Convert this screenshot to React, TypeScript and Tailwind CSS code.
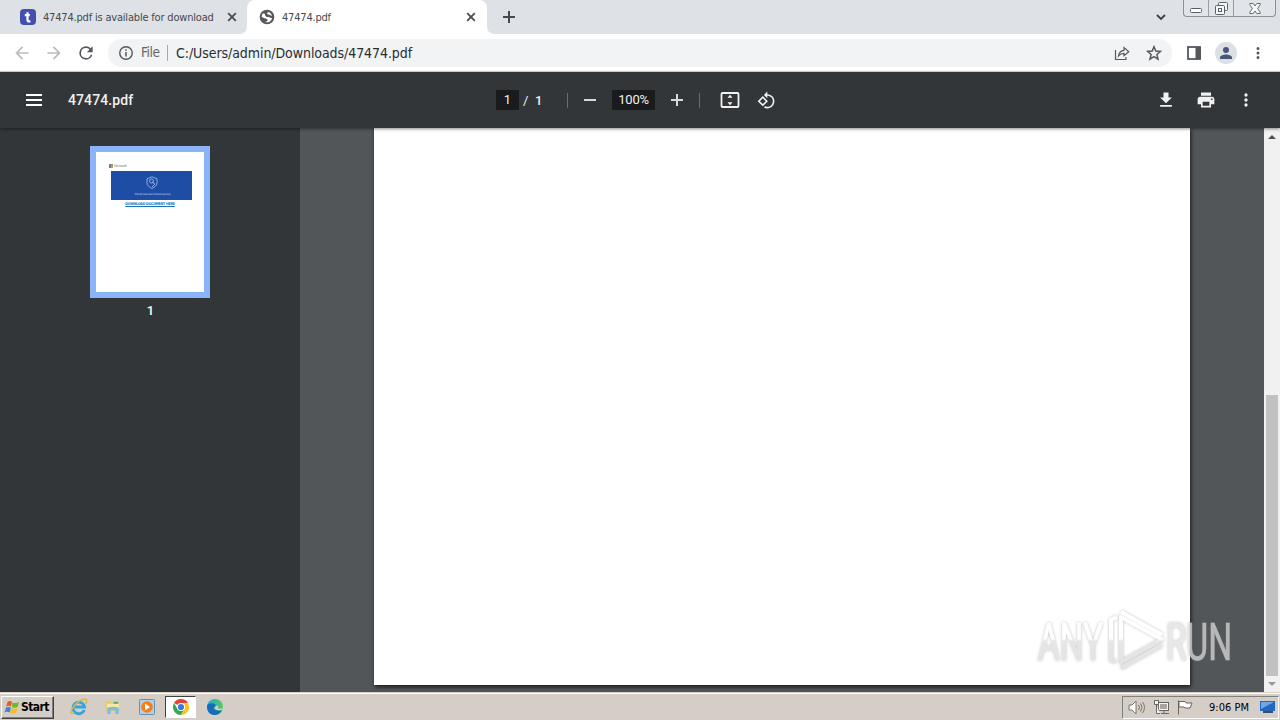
import type { ReactNode } from "react";

function Cell({ className = "", children }: { className?: string; children?: ReactNode }) {
  return <div className={`flex shrink-0 items-center justify-center ${className}`}>{children}</div>;
}

function Icon({ d, size = 16, className = "", box = 24 }: { d: string; size?: number; className?: string; box?: number }) {
  return (
    <svg width={size} height={size} viewBox={`0 0 ${box} ${box}`} className={`shrink-0 ${className}`} fill="currentColor">
      <path d={d} />
    </svg>
  );
}

const BACK = "M20 11H7.830l5.590-5.590L12 4l-8 8 8 8 1.410-1.410L7.830 13H20z";
const FORWARD = "M12 4l-1.410 1.410L16.170 11H4v2h12.170l-5.580 5.590L12 20l8-8z";
const RELOAD = "M17.650 6.350A7.960 7.960 0 0 0 12 4a8 8 0 1 0 7.730 10h-2.080A6 6 0 1 1 12 6c1.660 0 3.140.69 4.220 1.780L13 11h7V4z";
const MORE = "M12 8a2 2 0 1 0 0-4 2 2 0 0 0 0 4zm0 2a2 2 0 1 0 0 4 2 2 0 0 0 0-4zm0 6a2 2 0 1 0 0 4 2 2 0 0 0 0-4z";
const DOWNLOAD = "M19 9h-4V3H9v6H5l7 7zM5 18v2h14v-2z";
const PRINT = "M19 8H5a3 3 0 0 0-3 3v6h4v4h12v-4h4v-6a3 3 0 0 0-3-3zm-3 11H8v-5h8zm3-7a1 1 0 1 1 0-2 1 1 0 0 1 0 2zM18 3H6v4h12z";
const ROTATE = "M7.34 6.41L.86 12.9l6.49 6.48 6.49-6.48-6.5-6.49zM3.69 12.9l3.66-3.66L11 12.9l-3.66 3.66-3.65-3.66zm15.67-6.26C17.61 4.88 15.3 4 13 4V.76L8.76 5 13 9.24V6c1.79 0 3.58.68 4.95 2.05 2.73 2.73 2.73 7.17 0 9.9C16.58 19.32 14.79 20 13 20c-.97 0-1.94-.21-2.84-.61l-1.49 1.49C10.02 21.62 11.51 22 13 22c2.3 0 4.61-.88 6.36-2.64 3.52-3.51 3.52-9.21 0-12.72z";
const GLOBE = "M12 1a11 11 0 1 0 0 22 11 11 0 0 0 0-22zM4 12c0-2 .6-3.800 1.800-5.200 1.700 0 3.200.2 3.200 1.700 0 2 2 1.500 2 3.500h4c1.500 0 1.500 2 4.800 1.500A8 8 0 0 1 9 19.400c2-.4 4-1.400 4-3.400-2-1-3-2-5-2-1.500 0-2-2-4-2zm8-6c2-1 3-1 4-.9A8 8 0 0 1 19.500 10c-2 .5-2-1.500-4-1.500S12 8 12 6z";

function CloseMark() {
  return <svg width="10" height="10"><path d="M1.200 1.200l7.600 7.600M8.800 1.200L1.200 8.800" stroke="#4b4f54" strokeWidth="1.900" /></svg>;
}

function TabStrip() {
  return (
    <div className="flex h-[34px] shrink-0 bg-[#dee1e6] text-[#45494d]">
      <div className="flex w-[247px] shrink-0 items-center pl-5">
        <svg width="16" height="16" viewBox="0 0 16 16">
          <rect width="16" height="16" rx="4" fill="#4350af" />
          <path d="M7.500 3.300v8q0 1.600 2.900 1M4.800 6.200h5" fill="none" stroke="#fff" strokeWidth="2.200" />
        </svg>
        <span className="ml-[7px] w-[180px] whitespace-nowrap text-[11px] leading-none tracking-[-0.19px]">47474.pdf is available for download</span>
        <Cell className="w-[18px]"><CloseMark /></Cell>
      </div>
      <div className="relative flex w-[240px] shrink-0 items-center rounded-t-[8px] bg-white pl-3">
        <svg className="absolute -left-2 bottom-0" width="8" height="8"><path d="M8 0v8H0Q8 8 8 0" fill="#fff" /></svg>
        <svg className="absolute -right-2 bottom-0" width="8" height="8"><path d="M0 0v8h8Q0 8 0 0" fill="#fff" /></svg>
        <Icon d={GLOBE} size={16} className="text-[#55585c]" />
        <span className="ml-[7px] w-[180px] whitespace-nowrap text-[11px] leading-none tracking-[-0.2px]">47474.pdf</span>
        <Cell className="w-[18px]"><CloseMark /></Cell>
      </div>
      <Cell className="w-[44px]">
        <svg width="12" height="12"><path d="M6 0v12M0 6h12" stroke="#45494d" strokeWidth="2" /></svg>
      </Cell>
      <div className="flex-1" />
      <Cell className="mr-[14px] w-4">
        <svg width="10" height="7"><path d="M1 1l4 4 4-4" fill="none" stroke="#3c4043" strokeWidth="1.800" /></svg>
      </Cell>
      <div className="mr-[4px] flex h-[17px] w-[93px] shrink-0 rounded-b-[4px] border border-t-0 border-[#8c9097] bg-[#e1e4e9]">
        <Cell className="w-[25px] border-r border-[#9a9ea5] pt-[4px]">
          <svg width="12" height="5"><rect x=".5" y=".5" width="11" height="4" rx="1" fill="#fff" stroke="#5b6067" /></svg>
        </Cell>
        <Cell className="w-[25px] border-r border-[#9a9ea5]">
          <svg width="13" height="13" fill="#f4f5f7" stroke="#5b6067"><rect x="3.500" y=".5" width="9" height="8" rx="1" /><rect x=".5" y="3.500" width="9" height="9" rx="1" /><rect x="3.500" y="6.500" width="3" height="3" /></svg>
        </Cell>
        <Cell className="flex-1">
          <svg width="12" height="11" fill="#f5f6f8" stroke="#686d74"><path d="M.8.500h3.400L6 3 7.800.5h3.400v1.300L8.600 5.500l2.600 3.700v1.300H7.800L6 8l-1.800 2.500H.8V9.200l2.600-3.700L.8 1.800z" /></svg>
        </Cell>
      </div>
    </div>
  );
}

function AddressBar() {
  return (
    <div className="flex h-[38px] shrink-0 items-center border-b border-[#d5d9dd] bg-white pl-[6px] text-[#54585d]">
      <Cell className="w-8 text-[#babcbe]"><Icon d={BACK} size={20} /></Cell>
      <Cell className="w-8 text-[#babcbe]"><Icon d={FORWARD} size={20} /></Cell>
      <Cell className="mr-[6px] w-8"><Icon d={RELOAD} size={20} /></Cell>
      <div className="flex h-7 w-[1064px] items-center rounded-full bg-[#f1f3f4] pl-[11px]">
        <svg width="14" height="14" viewBox="0 0 14 14"><circle cx="7" cy="7" r="6.250" fill="none" stroke="currentColor" strokeWidth="1.400" /><path d="M7 6v4.500M7 3.300v1.500" stroke="currentColor" strokeWidth="1.500" /></svg>
        <span className="ml-[8px] w-[26px] text-[13.500px] leading-none tracking-[-0.4px] text-[#63676b]">File</span>
        <div className="h-4 w-px bg-[#a5a8ac]" />
        <span className="ml-[8px] flex-1 whitespace-nowrap text-[14px] leading-none tracking-[-0.07px] text-[#2a2d31]">C:/Users/admin/Downloads/47474.pdf</span>
        <Cell className="w-8">
          <svg width="16" height="16" fill="none" stroke="currentColor" strokeWidth="1.200"><path d="M1.500 5v9.500h10.500V12M4.500 11c.5-4 2.500-5.500 5.500-5.700V2.500l4.800 4.300-4.800 4V8.300C7.500 8.300 6 9 4.500 11z" /></svg>
        </Cell>
        <Cell className="mr-[2px] w-8">
          <svg width="16" height="16" viewBox="0 0 16 16"><path d="M8 1.700l1.800 4.300 4.700.4-3.600 3.100 1.100 4.600L8 11.700l-4 2.400 1.100-4.600-3.600-3.100L6.200 6z" fill="none" stroke="currentColor" strokeWidth="1.500" /></svg>
        </Cell>
      </div>
      <Cell className="ml-[8px] w-7">
        <svg width="14" height="14"><rect x="1" y="1" width="12" height="12" fill="none" stroke="currentColor" strokeWidth="1.800" /><path d="M8.500 1H14v12H8.500z" fill="currentColor" /></svg>
      </Cell>
      <Cell className="ml-[7px] h-[22px] w-[22px] rounded-full bg-[#dcdfe3]">
        <svg width="12" height="12" fill="#4a5678"><circle cx="6" cy="3" r="3" /><path d="M0 12v-1.500C0 8.500 3.500 7.500 6 7.500s6 1 6 3V12z" /></svg>
      </Cell>
      <Cell className="ml-[5px] w-8"><Icon d={MORE} size={18} /></Cell>
    </div>
  );
}

function PdfToolbar() {
  return (
    <div className="relative z-10 flex h-14 shrink-0 items-center bg-[#323639] pl-[24px] font-['Roboto',sans-serif] text-[#f1f1f1] shadow-[0_1px_3px_rgba(0,0,0,0.45)]">
      <Cell className="w-5"><svg width="16" height="12"><path d="M0 1h16M0 6h16M0 11h16" stroke="#fff" strokeWidth="2" /></svg></Cell>
      <span className="ml-[24px] w-[428px] text-[14px] font-medium leading-none tracking-[0.1px]">47474.pdf</span>
      <Cell className="h-5 w-[23px] bg-[#191b1c] text-[13px]">1</Cell>
      <span className="ml-[4px] w-[12px] text-[13px] leading-none">/</span>
      <span className="w-[32px] text-[13px] font-medium leading-none">1</span>
      <div className="h-[15px] w-px bg-[#696d70]" />
      <Cell className="w-[44px]"><svg width="12" height="2"><path d="M0 1h12" stroke="#d7d9da" strokeWidth="2" /></svg></Cell>
      <Cell className="h-5 w-[43px] bg-[#191b1c] text-[13px] tracking-[-0.2px]">100%</Cell>
      <Cell className="w-[44px]"><svg width="12" height="12"><path d="M0 6h12M6 0v12" stroke="#d7d9da" strokeWidth="2" /></svg></Cell>
      <div className="h-[15px] w-px bg-[#696d70]" />
      <Cell className="ml-[12px] w-9">
        <svg width="20" height="16"><rect x="1.500" y="1" width="17" height="14" rx="1" fill="none" stroke="#f1f1f1" strokeWidth="1.800" /><path d="M10 2.700l2.500 3h-5zM10 13.300l2.500-3h-5z" fill="#f1f1f1" /></svg>
      </Cell>
      <Cell className="w-9"><Icon d={ROTATE} size={19} /></Cell>
      <div className="flex-1" />
      <Cell className="w-10"><Icon d={DOWNLOAD} size={20} /></Cell>
      <Cell className="w-10"><Icon d={PRINT} size={20} /></Cell>
      <Cell className="mr-[14px] w-10"><Icon d={MORE} size={20} /></Cell>
    </div>
  );
}

function Thumbnail() {
  return (
    <div className="flex w-[300px] shrink-0 flex-col items-center bg-[#323639] pt-[18px]">
      <div className="h-[152px] w-[120px] border-[6px] border-[#8ab4f8] bg-white">
        <div className="flex h-[19px] items-end gap-px pb-[3px] pl-[13px]">
          <svg width="4" height="4"><path d="M0 0h2v2H0z" fill="#b66e4b" /><path d="M2 0h2v2H2z" fill="#879b5a" /><path d="M0 2h2v2H0z" fill="#6a7f8b" /><path d="M2 2h2v2H2z" fill="#c5a648" /></svg>
          <span className="text-[3.500px] leading-[4px] tracking-[-0.200px] text-[#777]">Microsoft</span>
        </div>
        <div className="ml-[15px] flex h-[29px] w-[81px] flex-col items-center bg-[#1d4da5] pt-[5px]">
          <svg width="12" height="13" viewBox="0 0 12 13" fill="none" stroke="#a9c2ec" strokeWidth=".8"><path d="M6 .8l5 2v4c0 3-2.500 4.500-5 5.700C3.500 11.300 1 9.800 1 6.800v-4z" /><circle cx="5.500" cy="5" r="2" /><path d="M6 6l3 2-3 3" /></svg>
          <span className="ml-[2px] mt-[3px] whitespace-nowrap text-[2.800px] leading-[4px] tracking-[-0.200px] text-[#c1d1ec]">This file has been shared securely</span>
        </div>
        <div className="mt-[2px] whitespace-nowrap text-center text-[3.700px] font-bold leading-[4px] tracking-[-0.280px] text-[#1672bd] underline">DOWNLOAD DOCUMENT HERE</div>
      </div>
      <span className="ml-px mt-[6px] font-['Roboto',sans-serif] text-[13px] font-medium leading-[14px] text-white">1</span>
    </div>
  );
}

function Watermark() {
  return (
    <svg className="absolute left-[1030px] top-[600px] z-20" width="250" height="80" viewBox="0 0 250 80">
      <defs>
        <linearGradient id="wm" gradientUnits="userSpaceOnUse" x1="0" y1="10" x2="0" y2="70">
          <stop offset="0" stopColor="#fff" />
          <stop offset=".48" stopColor="#fff" />
          <stop offset=".52" stopColor="#e6e6e6" />
          <stop offset="1" stopColor="#e3e3e3" />
        </linearGradient>
        <linearGradient id="run" gradientUnits="userSpaceOnUse" x1="136" y1="0" x2="204" y2="0">
          <stop offset=".34" stopColor="#e8e8e8" />
          <stop offset=".36" stopColor="#b6b8ba" />
        </linearGradient>
        <filter id="halo" x="-10%" y="-10%" width="120%" height="120%"><feDropShadow dx="0" dy="0" stdDeviation="1.500" floodColor="#666" floodOpacity=".45" /></filter>
      </defs>
      <g filter="url(#halo)">
        <g fontFamily="Roboto, sans-serif" fontSize="51" strokeWidth=".7">
          <text x="8" y="60" textLength="65" lengthAdjust="spacingAndGlyphs" fill="url(#wm)" stroke="url(#wm)">ANY</text>
          <text x="136" y="60" textLength="66" lengthAdjust="spacingAndGlyphs" fill="url(#run)" stroke="url(#run)">RUN</text>
        </g>
        <g fill="none" stroke="url(#wm)" strokeWidth="4" strokeLinejoin="round">
          <path d="M91 17v45l41-22.500z" />
          <path d="M87 17l-6 3v40l5 2M91 12l41 23M91 68l41-23" />
        </g>
      </g>
    </svg>
  );
}

function Viewer() {
  return (
    <div className="flex min-h-0 flex-1">
      <Thumbnail />
      <div className="flex w-[964px] shrink-0 bg-[#525659] pl-[74px]">
        <div className="h-[557px] w-[816px] bg-white shadow-[1px_2px_4px_rgba(0,0,0,0.7)]" />
      </div>
      <div className="flex w-4 flex-col items-center bg-[#f1f1f1]">
        <Cell className="h-[17px] w-4"><svg width="8" height="4"><path d="M0 4l4-4 4 4z" fill="#505050" /></svg></Cell>
        <div className="h-[250px]" />
        <div className="h-[281px] w-[12px] bg-[#c1c1c1]" />
        <Cell className="h-4 w-4"><svg width="8" height="4"><path d="M0 0l4 4 4-4z" fill="#9a9a9a" /></svg></Cell>
      </div>
    </div>
  );
}

function Taskbar() {
  return (
    <div className="flex h-7 shrink-0 items-center border-t border-[#d4d0c8] bg-[#d5cec7] shadow-[inset_0_1px_0_#fff]">
      <div className="ml-px mt-px flex h-[23px] w-[53px] items-center border border-b-[#404040] border-l-white border-r-[#404040] border-t-white pl-[2px] shadow-[inset_-1px_-1px_0_#808080]">
        <svg width="16" height="15" viewBox="0 0 16 15"><path d="M3.500 2Q6 .2 8 2L7 6.500Q5 5.200 2.200 6.500z" fill="#e85a24" /><path d="M8.700 2.400Q12 4 15 2l-1.400 5Q10.500 8.500 7.800 7z" fill="#70b62e" /><path d="M2 7.500Q5 6.200 7 7.700L5.700 12.500Q3 11 .5 12.500z" fill="#3e84d8" /><path d="M7.600 8.100q3.200 1.500 6 0l-1.300 5Q9 14.500 6.200 12.800z" fill="#f5bd2d" /></svg>
        <span className="ml-[1px] text-[12px] font-bold leading-none tracking-[-0.550px] text-black">Start</span>
      </div>
      <Cell className="ml-[8px] w-[34px]">
        <svg width="18" height="18" viewBox="0 0 18 18" fill="none"><path d="M14.300 12A5.800 5.800 0 1 1 14.600 9H5" stroke="#36a4da" strokeWidth="2.800" /><path d="M4 14c-3 3-4 1-2-3C5 5 13 0 16 1.500c1.300.7.500 3-.5 4.500" stroke="#dcb444" strokeWidth="1.400" /></svg>
      </Cell>
      <Cell className="w-[34px]">
        <svg width="16" height="16" viewBox="0 0 17 17"><path d="M1 3l5-1 1 2h8v9H1z" fill="#e4ca68" /><path d="M2 5h13v4H2z" fill="#f7eaa4" /><path d="M9 3h5v2H9z" fill="#53a95c" /><path d="M2.500 16V9.500q6-2.500 12 0V16H11v-4H6v4z" fill="#7ebce2" /></svg>
      </Cell>
      <Cell className="w-[34px]">
        <svg width="16" height="16"><rect x=".5" y=".5" width="15" height="15" rx="1" fill="#b4cee4" stroke="#6390b8" /><circle cx="8" cy="8" r="5.800" fill="#f07f1c" /><path d="M6 4.500l5 3.500-5 3.500z" fill="#fff" /></svg>
      </Cell>
      <Cell className="ml-px mt-px h-[22px] w-[31px] border border-b-white border-l-[#404040] border-r-white border-t-[#404040] bg-white">
        <svg width="16" height="16" viewBox="0 0 16 16"><circle cx="8" cy="8" r="8" fill="#fff" /><path d="M8 8L1.070 4A8 8 0 0 1 14.930 4z" fill="#e44235" /><path d="M1.070 4A8 8 0 0 0 8 16l3.500-6L8 8 4.500 10z" fill="#35a853" /><path d="M14.930 4A8 8 0 0 1 8 16l3.500-6L8 4z" fill="#fcc31e" /><circle cx="8" cy="8" r="4" fill="#fff" /><circle cx="8" cy="8" r="3.100" fill="#3479e8" /></svg>
      </Cell>
      <Cell className="w-[37px]">
        <svg width="16" height="16" viewBox="0 0 16 16"><defs><linearGradient id="edge"><stop stopColor="#22a7dc" /><stop offset="1" stopColor="#55cc56" /></linearGradient></defs><circle cx="8" cy="8" r="8" fill="url(#edge)" /><path d="M0 7c1-3 8-4 9 0-5 2-2 6 6 4-2 5-8 6-11 4C1 14 0 10 0 7z" fill="#146cbd" /><path d="M8 8c-1 2 2 4 7 3l1-3c-1 2-4 2.500-5 1V7q-1.500-1-3 1z" fill="#d5cec7" /></svg>
      </Cell>
      <div className="flex-1" />
      <div className="mr-[1px] mt-px flex h-[23px] w-[157px] items-center border border-b-white border-l-[#808080] border-r-white border-t-[#808080] pl-[3px]">
        <Cell className="w-[22px]">
          <svg width="18" height="15" fill="#fff" stroke="#77736e"><path d="M1 5h3l4-4v13L4 10H1z" /><path d="M10.500 5q2 2.500 0 5M12.500 3.500q3 4 0 8M14.500 2q4 5.500 0 11" fill="none" /></svg>
        </Cell>
        <Cell className="w-[26px]">
          <svg width="17" height="16" fill="#f5f4f1" stroke="#69655f"><rect x="5.500" y="3.500" width="10" height="8" /><path d="M7 5h7v5H7z" fill="#aaa69f" stroke="none" /><path d="M8 14.500h8M11 12v2M1.500 1.500h4v4h-4zM3.500 6v8.500H7" /></svg>
        </Cell>
        <Cell className="w-[23px]">
          <svg width="17" height="15" fill="#fff" stroke="#69655f"><path d="M1.500.5v14M2 1.500h6l1 1.500h6l-2 5H8L7 7H2z" /></svg>
        </Cell>
        <span className="ml-[12px] w-[51px] whitespace-nowrap text-[11px] leading-none tracking-[0.020px] text-black">9:06 PM</span>
        <svg width="15" height="14"><path d="M0 1h15v10H0z" fill="#2468be" /><path d="M1 2h13L1 9z" fill="#6ca8e6" /><path d="M3 11h10v2H3z" fill="#35506f" /></svg>
      </div>
    </div>
  );
}

export default function App() {
  return (
    <div className="relative flex h-[720px] w-[1280px] flex-col overflow-hidden bg-white font-['DejaVu_Sans_Condensed','Noto_Sans',sans-serif]">
      <TabStrip />
      <AddressBar />
      <PdfToolbar />
      <Viewer />
      <Taskbar />
      <Watermark />
    </div>
  );
}
